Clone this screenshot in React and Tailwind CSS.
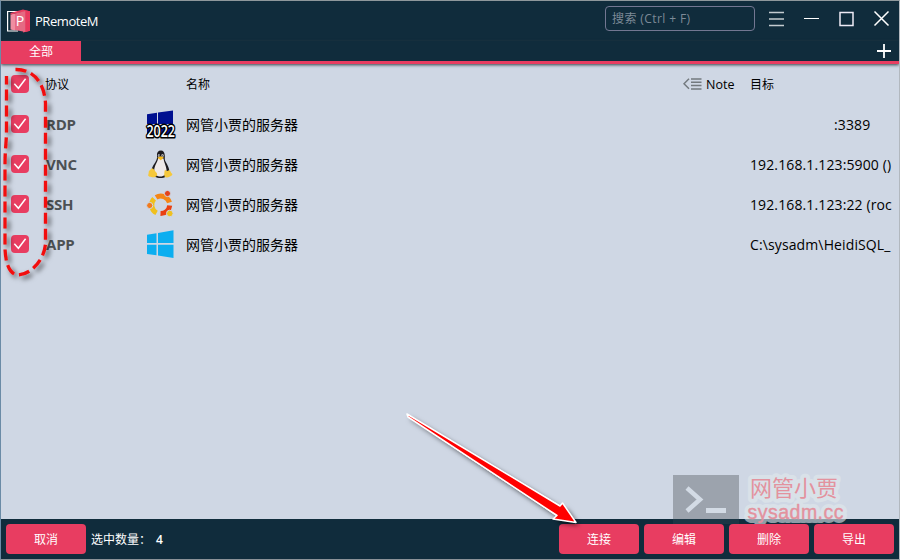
import React from "react";

const latin = "font-['Open_Sans','Noto_Sans_CJK_SC',sans-serif]";

function Logo() {
  return (
    <svg width="26" height="26" viewBox="0 0 26 26">
      <path d="M12 3.500H1.600v19.500H12" fill="none" stroke="#fff" strokeWidth="1.200" />
      <path d="M4.500 6.500 9 5.500v17L4.500 21.500z" fill="#f08da1" />
      <path d="M4.500 6.500V5L17 1.500l7 1.800v19.500L17 24.500V4z" fill="#e83e60" />
      <path d="M9 5.500 19.500 3v21L9 22z" fill="#e56a83" />
      <path d="M19.500 2.500 24 3.300v19.500l-4.500 1.200z" fill="#e83a5e" />
      <text x="9.700" y="18" fontSize="14" fill="#fff" fontFamily="Open Sans">P</text>
    </svg>
  );
}

function Check() {
  return (
    <span className="flex h-[18px] w-[18px] shrink-0 items-center justify-center rounded-[4px] bg-[#e83d61]">
      <svg width="18" height="18" viewBox="0 0 18 18">
        <path d="M3.300 8.700 7.400 13.300 14.600 3.700" fill="none" stroke="#fff" strokeWidth="1.500" />
      </svg>
    </span>
  );
}

function Server2022() {
  return (
    <svg className="overflow-visible" width="32" height="30" viewBox="0 0 32 30">
      <path d="M2 4.200 12 2.700V14H2zM13 2.500 28 .5V14H13zM2 15h10v10H2zM13 15h15v11H13z" fill="#001090" />
      <text x="1.500" y="27" textLength="28.500" lengthAdjust="spacingAndGlyphs" fontSize="15.500" fontWeight="600" fontFamily="Open Sans" fill="#fff" stroke="#000" strokeWidth="3" strokeLinejoin="round" paintOrder="stroke">2022</text>
    </svg>
  );
}

function Tux() {
  return (
    <svg width="32" height="30" viewBox="-0.500 0.500 32 30">
      <path d="M15.500 1c-3 0-4.300 2-4 5 .3 3-.2 4-2 7.200C7 16.500 5.500 20 6 23c1 4 5 5.500 9 5.500s8-2 8.700-6c.5-3-1.500-7-3.700-10.500-1.200-2-.5-4-.7-6C19 2.500 17.700 1 15.500 1z" fill="#1d1b1f" />
      <path d="M12.700 8.500c-.3 3.500-4 7.500-4 12.500 0 4 3 6 6.300 6s6.500-2.500 6-7c-.4-4-2.600-7-3-11z" fill="#eee9e9" />
      <ellipse cx="13.400" cy="6" rx="1.100" ry="1.500" fill="#bbb" />
      <ellipse cx="17" cy="6" rx="1.300" ry="1.600" fill="#bbb" />
      <circle cx="13.700" cy="6.300" r=".55" fill="#111" />
      <circle cx="16.800" cy="6.300" r=".55" fill="#111" />
      <path d="M11.800 8.200 15 6.800l3.400 1.300-3.100 2.700z" fill="#f6b91d" />
      <path d="M6.500 18.800c1.800.2 3 3 4.500 4.500 1.700 2-.2 4.500-2.500 4.500-2 0-5.500-.3-5.800-1.700-.2-1 .7-2.400.5-3.700 0-1.400 1.800-2 3.300-3.600z" fill="#f5c83c" />
      <path d="M20 20.300c.2 1.300 1.800 1.700 3 .8 1-.8 2 .6 2.300 1.700.5 1 1.900 1.200 1.500 2.400-.6 1.300-3.700 2.600-5.400 2.700-2.800 0-2.800-2.300-2.600-4 .2-1.300.1-3.700 1.200-3.600z" fill="#f5c83c" />
    </svg>
  );
}

function Ubuntu() {
  return (
    <svg width="32" height="30" viewBox="-1 0 32 30">
      <g fill="none" strokeWidth="5">
        <path d="M10.100 7.400A9 9 0 0 1 23.500 12.500" stroke="#f58616" />
        <path d="M23.700 15.500A9 9 0 0 1 14.500 23.600" stroke="#ea4012" />
        <path d="M10.600 22.900A9 9 0 0 1 8.100 8.800" stroke="#f0c01d" />
      </g>
      <g stroke="#cfd7e4" strokeWidth="1">
        <circle cx="3.700" cy="15.500" r="3.100" fill="#f37a1c" />
        <circle cx="21.500" cy="3.500" r="3.100" fill="#e4431a" />
        <circle cx="23.800" cy="23.500" r="3.300" fill="#efc020" />
      </g>
    </svg>
  );
}

function Windows() {
  return (
    <svg width="32" height="30" viewBox="-0.500 0.500 32 30">
      <path d="M1.500 5.200 11 3.800V13.500H1.500zM12.500 3.500 28 .7V13.500H12.500zM1.500 15.300h9.500v10.500L1.500 24.500zM12.500 15.300H28v13.200l-15.500-2.400z" fill="#0caef0" />
    </svg>
  );
}

const servers = [
  { protocol: "RDP", Icon: Server2022, target: ":3389", pad: "pl-[84px]" },
  { protocol: "VNC", Icon: Tux, target: "192.168.1.123:5900 ()", pad: "" },
  { protocol: "SSH", Icon: Ubuntu, target: "192.168.1.123:22 (roc", pad: "" },
  { protocol: "APP", Icon: Windows, target: "C:\\sysadm\\HeidiSQL_", pad: "" },
];

function Button({ children }) {
  return (
    <button className="h-[30px] w-[80px] rounded-[4px] bg-[#e83d61] pt-[2px] text-[12px] leading-none text-white">
      {children}
    </button>
  );
}

function TitleBar() {
  return (
    <header className="flex h-[40px] shrink-0 bg-[#102c3c] text-white">
      <div className="flex w-[500px] pl-[5px] pt-[7px]">
        <Logo />
        <span className="ml-[3px] mt-[4px] text-[13px] leading-[18px] tracking-[-0.45px]">PRemoteM</span>
      </div>
      <div className="ml-auto flex pt-[5px]">
        <div className="h-[25px] w-[150px] whitespace-nowrap rounded-[4px] border border-[#737792] pl-[6px] text-[12px] leading-[24px] tracking-[0.4px] text-[#7d8a97]">搜索 (Ctrl + F)</div>
        <svg className="ml-[13px]" width="131" height="26" viewBox="0 0 131 26" fill="none" stroke="#fff">
          <path d="M1 6.500h15M1 13h15M1 19.500h15" stroke="#c3cbd0" strokeWidth="1.300" />
          <path d="M36 12.500h15" />
          <path d="M72 6.500h13v13H72z" stroke="#eeeaf5" strokeWidth="1.500" />
          <path d="m106.500 5.500 14 14m0-14-14 14" strokeWidth="1.500" />
        </svg>
      </div>
    </header>
  );
}

export default function App() {
  return (
    <div className={`relative flex h-[560px] w-[900px] flex-col overflow-hidden border border-b-[#8b9298] border-l-[#6b8ba6] border-r-[#b2b8bf] border-t-[#8f989c] bg-[#cfd7e4] text-black ${latin}`}>
      <TitleBar />
      <nav className="flex h-[23px] shrink-0 items-start justify-between border-b-[3px] border-[#e83d61] bg-[#102c3c] text-white shadow-[0_1px_3px_#36434a]">
        <div className="h-[20px] w-[80px] bg-[#e83d61] text-center text-[12px] leading-[22px]">全部</div>
        <svg className="mr-[7px] mt-[2px]" width="16" height="16" viewBox="0 0 16 16">
          <path d="M8 1v14M1 8h14" stroke="#fff" strokeWidth="1.800" />
        </svg>
      </nav>
      <main className="flex-1">
        <div className="flex h-[40px] items-center pl-[10px] text-[12px] leading-[16px]">
          <Check />
          <span className="ml-[16px] w-[141px] pt-[2px]">协议</span>
          <span className="w-[497px] pt-[2px]">名称</span>
          <svg width="20" height="12" viewBox="0 0 20 12" fill="none" stroke="#73797e" strokeWidth="1.500">
            <path d="M6 .8 1 5.800l5 5M8 1h10.500M8 4.300h10.500M8 7.600h10.500M8 11h10.500" />
          </svg>
          <span className="ml-[3px] w-[44px] pt-[2px] text-[12.500px]">Note</span>
          <span className="pt-[2px]">目标</span>
        </div>
        {servers.map(({ protocol, Icon, target, pad }) => (
          <div key={protocol} className="flex h-[40px] items-center pl-[10px] text-[14px] leading-[20px]">
            <Check />
            <span className="ml-[17px] w-[99px] pb-px text-[15px] font-bold tracking-[-0.2px] text-[#4c5154]">{protocol}</span>
            <span className="pt-[2px]">
              <Icon />
            </span>
            <span className="ml-[9px] w-[564px] pt-[2px]">网管小贾的服务器</span>
            <span className={`whitespace-nowrap pt-[2px] tracking-[0.12px] ${pad}`}>{target}</span>
          </div>
        ))}
      </main>
      <footer className="flex h-[40px] shrink-0 items-center bg-[#102c3c] px-[5px] text-[12px] text-white">
        <Button>取消</Button>
        <span className="ml-[5px] pt-[2px]">选中数量：</span>
        <span className="ml-[5px] pt-px font-semibold">4</span>
        <div className="ml-auto flex gap-[5px]">
          <Button>连接</Button>
          <Button>编辑</Button>
          <Button>删除</Button>
          <Button>导出</Button>
        </div>
      </footer>

      <svg className="pointer-events-none absolute -left-px -top-px" width="900" height="560" viewBox="0 0 900 560">
        <defs>
          <filter id="shadow" x="-30%" y="-30%" width="160%" height="160%">
            <feDropShadow dx="3" dy="3" stdDeviation="2.500" floodColor="#000" floodOpacity=".6" />
          </filter>
          <clipPath id="aboveFooter"><path d="M0 0h900v519H0z" /></clipPath>
          <clipPath id="overFooter"><path d="M0 519h900v5H0z" /></clipPath>
        </defs>
        <path d="M15.500 69.500C31 69 44 80 45.500 103V244C44 260 31 275 17 275C8 273 5 260 5 246V165C5 150 6.500 140 6.500 132V76" fill="none" stroke="#f20d0d" strokeWidth="3.300" strokeDasharray="11 5" filter="url(#shadow)" />
        <path d="M407 414 565.500 509 562.500 503 576 522.500 553 519 557.500 516.500 408 417z" fill="#fff" filter="url(#shadow)" />
        <path d="M407 414 560 506 562.500 503 576 522.500 553 519 557 515.500 408 417z" fill="#f00" stroke="#fff" strokeWidth="1.500" strokeLinejoin="round" />
        <path d="M673 475h66v44h-66z" fill="#9ca3ad" />
        <path d="M673 519h66v5h-66z" fill="#1b3645" />
        <path d="m687 488 13 11.500-13 11.500" fill="none" stroke="#d3dbe5" strokeWidth="4.500" />
        <path d="M706 508h20v5h-20z" fill="#d3dbe5" />
        <g fontFamily="Liberation Sans, Noto Sans CJK SC, sans-serif" strokeLinejoin="round">
          <g clipPath="url(#aboveFooter)" fill="#d9e1e8" stroke="#d9e1e8" strokeWidth="8">
            <text x="750" y="496" fontSize="22">网管小贾</text>
            <text x="747.500" y="519" fontSize="19.500" textLength="96">sysadm.cc</text>
          </g>
          <g clipPath="url(#overFooter)" fill="#8f9ea8" stroke="#8f9ea8" strokeWidth="8">
            <text x="747.500" y="519" fontSize="19.500" textLength="96">sysadm.cc</text>
          </g>
          <g fill="#e3929e">
            <text x="750" y="496" fontSize="22">网管小贾</text>
            <text x="747.500" y="519" fontSize="19.500" textLength="96" stroke="#e3929e" strokeWidth=".4">sysadm.cc</text>
          </g>
        </g>
      </svg>
    </div>
  );
}
